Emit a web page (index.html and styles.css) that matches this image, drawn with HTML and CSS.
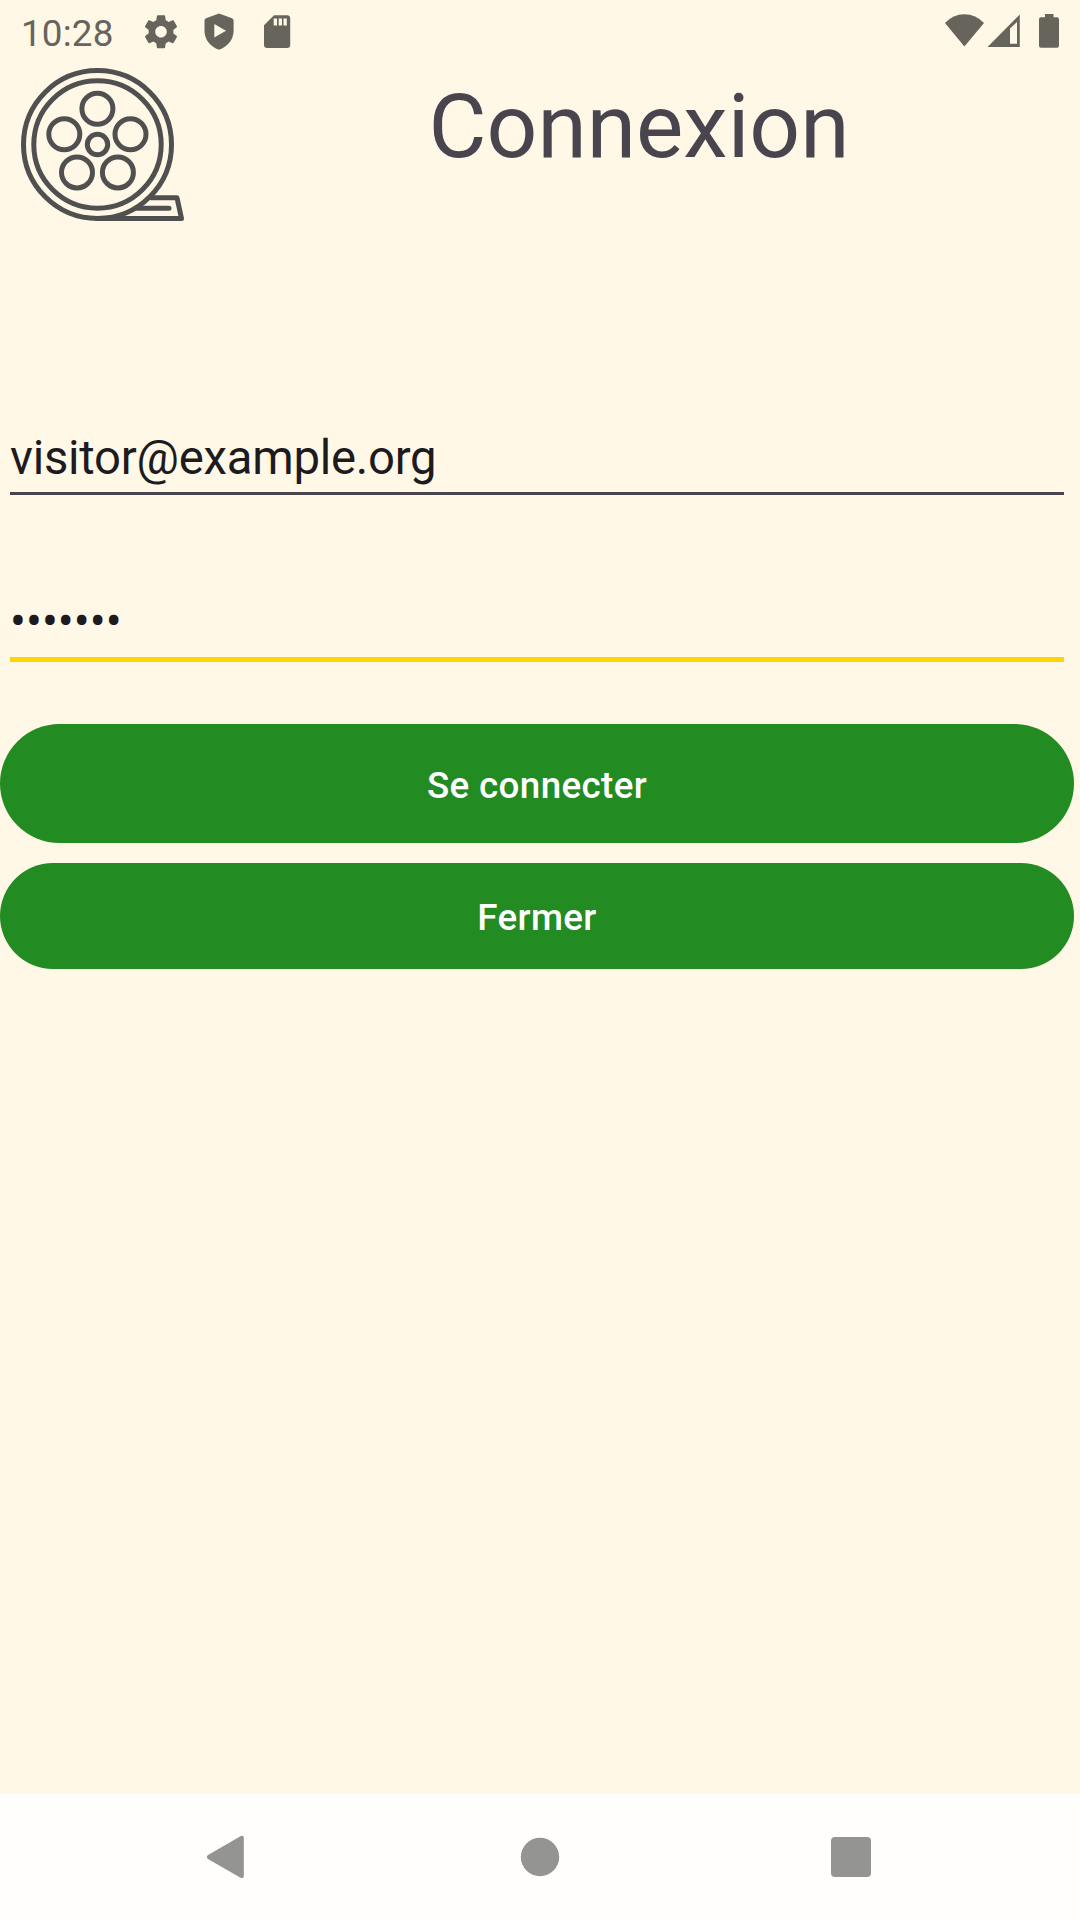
FILE: index.html
```html
<!DOCTYPE html>
<html lang="fr">
<head>
<meta charset="utf-8">
<title>Connexion</title>
<link rel="stylesheet" href="styles.css">
</head>
<body>
<div class="screen">
  <div class="status-bar">
    <span class="clock">10:28</span>
    <div class="status-left">
      <svg class="icon" width="40" height="63" viewBox="141 0 40 63"><g transform="translate(141.2 11.9) scale(1.65)"><path d="M19.43 12.98c.04-.32.07-.64.07-.98s-.03-.66-.07-.98l2.11-1.65c.19-.15.24-.42.12-.64l-2-3.46c-.12-.22-.39-.3-.61-.22l-2.49 1c-.52-.4-1.08-.73-1.69-.98l-.38-2.65C14.46 2.18 14.25 2 14 2h-4c-.25 0-.46.18-.49.42l-.38 2.65c-.61.25-1.17.59-1.69.98l-2.49-1c-.23-.09-.49 0-.61.22l-2 3.46c-.13.22-.07.49.12.64l2.11 1.65c-.04.32-.07.65-.07.98s.03.66.07.98l-2.11 1.65c-.19.15-.24.42-.12.64l2 3.46c.12.22.39.3.61.22l2.49-1c.52.4 1.08.73 1.69.98l.38 2.65c.03.24.24.42.49.42h4c.25 0 .46-.18.49-.42l.38-2.65c.61-.25 1.17-.59 1.69-.98l2.49 1c.23.09.49 0 .61-.22l2-3.46c.12-.22.07-.49-.12-.64l-2.11-1.65zM12 15.5c-1.93 0-3.5-1.57-3.5-3.5s1.570-3.500 3.500-3.500 3.500 1.570 3.500 3.500-1.570 3.500-3.500 3.500z"/></g></svg>
      <svg class="icon" width="40" height="63" viewBox="199 0 40 63"><path fill-rule="evenodd" d="M219 13.600L232 18.300Q233.600 19 233.600 20.700V31C233.600 39.500 227.500 46.800 219 49.700C210.500 46.800 204.500 39.500 204.500 31V20.700Q204.500 19 206.100 18.300ZM214.300 24V37.500L226 30.800Z"/></svg>
      <svg class="icon" width="40" height="63" viewBox="257 0 40 63"><path fill-rule="evenodd" d="M274 15.300H287Q290.200 15.300 290.200 18.500V44.700Q290.200 47.900 287 47.900H267.200Q264 47.900 264 44.700V25.300ZM273.700 18.500V25.500H277V18.500ZM278.700 18.500V25.500H282V18.500ZM283.500 18.500V25.500H286.800V18.500Z"/></svg>
    </div>
    <div class="status-right">
      <svg class="icon" width="39" height="63" viewBox="945 0 39 63"><path d="M945 23Q953 14.200 964.400 14.200T984 23L964.400 46.500Z"/></svg>
      <svg class="icon" width="33" height="63" viewBox="987 0 33 63"><path fill-rule="evenodd" d="M987.500 46.900L1019.800 14.400V46.900ZM1010 28.500V43.800H1017V22Z"/></svg>
      <svg class="icon" width="20" height="63" viewBox="1039 0 20 63"><path d="M1045 14H1053.500V17.300H1057Q1059 17.300 1059 19.300V45.700Q1059 47.700 1057 47.700H1041Q1039 47.700 1039 45.700V19.300Q1039 17.300 1041 17.300H1045Z"/></svg>
    </div>
  </div>

  <header class="header">
    <svg class="reel" width="200" height="173" viewBox="0 63 200 173">
      <circle cx="97.500" cy="144.500" r="74"/>
      <circle cx="97.500" cy="144.500" r="63.700"/>
      <circle cx="97.500" cy="144.500" r="10.200"/>
      <circle cx="97.400" cy="108.700" r="15.500"/>
      <circle cx="64.300" cy="134.300" r="15.500"/>
      <circle cx="130.500" cy="134.300" r="15.500"/>
      <circle cx="77" cy="172.400" r="15.500"/>
      <circle cx="117.900" cy="172.400" r="15.500"/>
      <path d="M97.500 218.500H181.500L177 197.800H151M136 208.300H169"/>
    </svg>
    <h1 class="title">Connexion</h1>
  </header>

  <main class="form">
    <div class="field email">visitor@example.org</div>
    <div class="field password">•••••••</div>
    <button class="button connect">Se connecter</button>
    <button class="button close">Fermer</button>
  </main>

  <nav class="nav-bar">
    <svg class="nav-icon" width="44" height="44" viewBox="203 1835 44 44"><path d="M208 1855L240.500 1836.200Q243.800 1834.900 243.800 1838.200V1875.800Q243.800 1879.100 240.500 1877.800L208 1859Q205.600 1857 208 1855Z"/></svg>
    <svg class="nav-icon" width="44" height="44" viewBox="516 1835 44 44"><circle cx="540" cy="1857" r="19.200"/></svg>
    <svg class="nav-icon" width="44" height="44" viewBox="829 1835 44 44"><rect x="831" y="1837" width="40" height="40" rx="4"/></svg>
  </nav>
</div>
</body>
</html>
```
FILE: styles.css
```css
* { box-sizing: border-box; }
body {
  margin: 0;
  background: #fff8e7;
  font-family: Roboto, "Liberation Sans", sans-serif;
}
.screen {
  width: 1080px;
  height: 1920px;
  display: flex;
  flex-direction: column;
}
.status-bar {
  display: flex;
  height: 63px;
  padding: 0 21px;
  color: #67645c;
}
.clock {
  width: 120px;
  padding-top: 4px;
  font-size: 36.75px;
  line-height: 59px;
  letter-spacing: 0.2px;
}
.status-left { display: flex; gap: 18px; }
.status-right { display: flex; margin-left: auto; }
.status-right .icon:nth-child(2) { margin: 0 19px 0 3px; }
.icon { display: block; fill: #67645c; }
.header {
  display: flex;
  height: 173px;
}
.reel {
  flex: none;
  fill: none;
  stroke: #505050;
  stroke-width: 5;
  stroke-linecap: round;
  stroke-linejoin: round;
}
.title {
  flex: 1;
  margin: 0;
  padding-right: 2px;
  height: 127px;
  line-height: 127px;
  text-align: center;
  font-size: 89.25px;
  font-weight: 400;
  color: #49454f;
}
.form {
  flex: 1;
  display: flex;
  flex-direction: column;
  padding: 184px 6px 0 0;
}
.field {
  margin: 0 10px;
  font-size: 47.25px;
  color: #1d1b20;
}
.email {
  height: 75px;
  line-height: 76px;
  letter-spacing: -0.24px;
  border-bottom: 3px solid #49454f;
}
.password {
  height: 82px;
  margin-top: 85px;
  line-height: 85px;
  border-bottom: 5px solid #ffd700;
}
.button {
  border: 0;
  width: 1074px;
  background: #228b22;
  color: #fff;
  font-family: inherit;
  font-size: 36.75px;
  font-weight: 500;
  letter-spacing: 0.37px;
  border-radius: 60px;
}
.connect {
  height: 119px;
  margin-top: 62px;
  padding: 4px 0 0;
}
.close {
  height: 106px;
  margin-top: 20px;
  padding: 3px 0 0;
}
.nav-bar {
  display: flex;
  align-items: center;
  justify-content: space-between;
  height: 126px;
  padding: 0 207px 0 203px;
  background: #fffefc;
}
.nav-icon { fill: #949492; }
```
